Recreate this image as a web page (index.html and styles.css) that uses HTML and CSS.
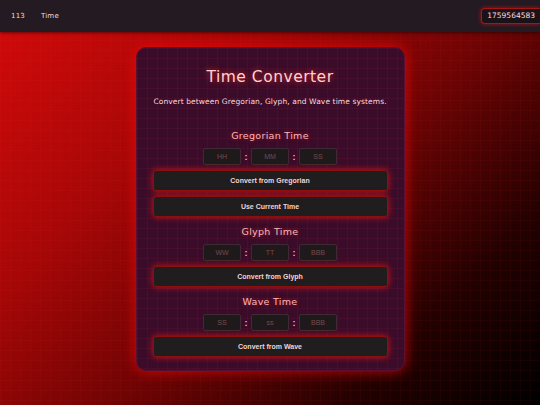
FILE: index.html
```html
<!DOCTYPE html>
<html>
<head>
<meta charset="utf-8">
<link rel="stylesheet" href="styles.css">
</head>
<body>
<header class="topbar">
  <nav class="nav">
    <span class="nav-link">113</span>
    <span class="nav-link">Time</span>
  </nav>
  <div class="stamp">1759564583</div>
</header>
<main class="main">
  <section class="card">
    <h1 class="title">Time Converter</h1>
    <p class="subtitle">Convert between Gregorian, Glyph, and Wave time systems.</p>

    <h2 class="section-title first">Gregorian Time</h2>
    <div class="inputs">
      <input class="field" placeholder="HH"><span class="colon">:</span>
      <input class="field" placeholder="MM"><span class="colon">:</span>
      <input class="field" placeholder="SS">
    </div>
    <button class="btn">Convert from Gregorian</button>
    <button class="btn">Use Current Time</button>

    <h2 class="section-title">Glyph Time</h2>
    <div class="inputs">
      <input class="field" placeholder="WW"><span class="colon">:</span>
      <input class="field" placeholder="TT"><span class="colon">:</span>
      <input class="field" placeholder="BBB">
    </div>
    <button class="btn">Convert from Glyph</button>

    <h2 class="section-title">Wave Time</h2>
    <div class="inputs">
      <input class="field" placeholder="SS"><span class="colon">:</span>
      <input class="field" placeholder="ss"><span class="colon">:</span>
      <input class="field" placeholder="BBB">
    </div>
    <button class="btn">Convert from Wave</button>
  </section>
</main>
</body>
</html>
```

FILE: styles.css
```css
html, body {
  margin: 0;
  padding: 0;
  height: 100%;
}
body {
  overflow: hidden;
  font-family: "DejaVu Sans", sans-serif;
  background-color: #000;
  background-image:
    linear-gradient(rgba(255, 60, 60, 0.045) 1px, transparent 1px),
    linear-gradient(90deg, rgba(255, 60, 60, 0.045) 1px, transparent 1px),
    linear-gradient(135deg, #d40a0a 0%, #a80707 30%, #700404 55%, #220101 80%, #000 100%);
  background-size: 10px 10px, 10px 10px, 100% 100%;
}
.topbar {
  height: 32px;
  background: #231a22;
  display: flex;
  align-items: center;
  justify-content: space-between;
  padding-left: 11px;
  padding-right: 0;
  overflow: hidden;
  box-shadow: 0 1px 3px rgba(0,0,0,0.5);
}
.nav {
  display: flex;
  gap: 16px;
}
.nav-link {
  color: #ffd6d6;
  font-size: 7px;
  letter-spacing: 0.2px;
}
.stamp {
  height: 14px;
  line-height: 14px;
  padding: 0 5px;
  border: 1px solid #a31616;
  border-right: none;
  border-radius: 4px 0 0 4px;
  background: #1a1218;
  color: #ffdede;
  font-size: 7.5px;
  box-shadow: 0 0 4px rgba(255, 20, 20, 0.6);
}
.main {
  display: flex;
  justify-content: center;
  padding-top: 15px;
}
.card {
  width: 235px;
  padding: 18px 16px 13px;
  background-color: #3a0c29;
  background-image:
    linear-gradient(rgba(255, 60, 90, 0.06) 1px, transparent 1px),
    linear-gradient(90deg, rgba(255, 60, 90, 0.06) 1px, transparent 1px);
  background-size: 10px 10px;
  border: 1px solid #5a1030;
  border-radius: 10px;
  box-shadow: 0 0 14px rgba(255, 10, 10, 0.75);
  display: flex;
  flex-direction: column;
  align-items: stretch;
  text-align: center;
}
.title {
  margin: 0;
  font-size: 15.5px;
  line-height: 22px;
  font-weight: normal;
  color: #ffd2d2;
  letter-spacing: 0.5px;
  text-shadow: 0 0 6px rgba(255, 40, 40, 0.9);
}
.subtitle {
  margin: 8px 0 0;
  font-size: 7.5px;
  line-height: 12px;
  color: #ffd8d8;
  letter-spacing: 0.1px;
  white-space: nowrap;
}
.section-title {
  margin: 8px 0 0;
  font-size: 9.5px;
  line-height: 14px;
  font-weight: normal;
  color: #ffb4b4;
  letter-spacing: 0.3px;
  text-shadow: 0 0 4px rgba(255, 40, 40, 0.6);
}
.section-title.first {
  margin-top: 21px;
}
.inputs {
  margin-top: 5px;
  display: flex;
  justify-content: center;
  align-items: center;
}
.field {
  box-sizing: border-box;
  width: 38px;
  height: 17px;
  padding: 0;
  background: #1e1a1c;
  border: 1px solid #3e2a30;
  border-radius: 2px;
  color: #e0b0b0;
  font-family: "Liberation Sans", Arial, sans-serif;
  font-size: 7px;
  text-align: center;
  outline: none;
}
.field::placeholder {
  color: #7a4848;
}
.colon {
  width: 10px;
  text-align: center;
  color: #ffbcbc;
  font-family: "Liberation Sans", Arial, sans-serif;
  font-weight: bold;
  font-size: 9px;
}
.btn {
  box-sizing: border-box;
  margin-top: 5px;
  height: 21px;
  width: 100%;
  background: #1f1d1e;
  border: 1px solid #8a1010;
  border-radius: 3px;
  color: #f2d4d4;
  font-family: "Liberation Sans", Arial, sans-serif;
  font-weight: bold;
  font-size: 7px;
  box-shadow: 0 0 7px rgba(255, 20, 20, 0.75);
  cursor: pointer;
}
```
